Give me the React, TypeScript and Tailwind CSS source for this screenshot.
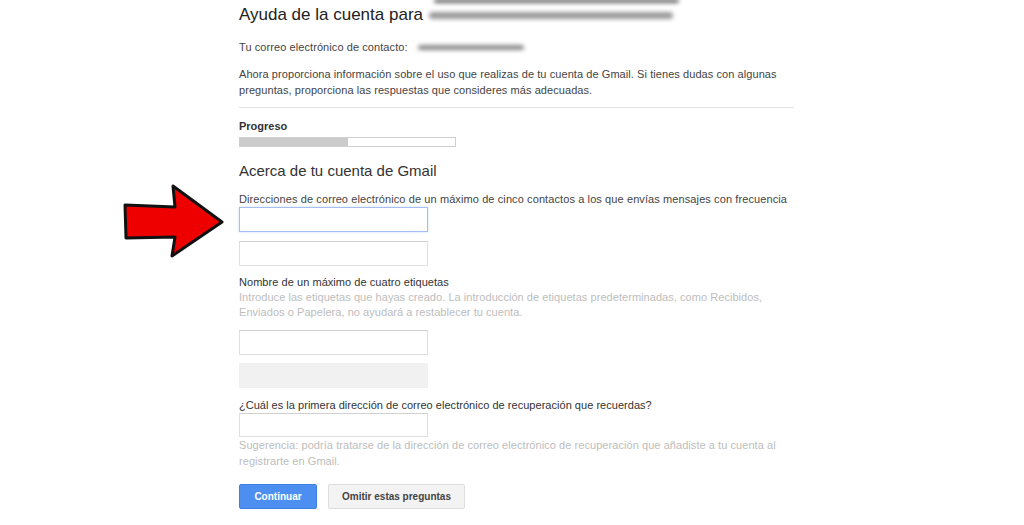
import React from "react";

function Blur({ className }: { className: string }) {
  return <span className={`inline-block rounded-full bg-[#8a8a8a] blur-[2px] ${className}`} />;
}

export default function App() {
  return (
    <div
      className="relative w-[1024px] h-[525px] overflow-hidden bg-white text-[#444]"
      style={{ fontFamily: '"Liberation Sans", Arial, sans-serif' }}
    >
      <div className="ml-[239px] w-[555px] flex flex-col">
        <div className="h-[4px] flex">
          <Blur className="ml-[195px] w-[245px] h-[4px] -mt-[1px] bg-[#666]" />
        </div>
        <div className="mt-[1px] h-[20px] flex items-center text-[17px] leading-[20px] text-[#222]">
          <span>Ayuda de la cuenta para</span>
          <Blur className="ml-[6px] w-[244px] h-[7px] bg-[#9a9a9a]" />
        </div>
        <div className="mt-[14px] h-[16px] flex items-center text-[11px] leading-4 tracking-[0.08px] text-[#444]">
          <span>Tu correo electrónico de contacto:</span>
          <Blur className="ml-[10px] w-[106px] h-[5px] bg-[#8a8a8a]" />
        </div>
        <p className="mt-[11px] text-[11px] leading-4 tracking-[0.07px] text-[#444]">
          Ahora proporciona información sobre el uso que realizas de tu cuenta de Gmail. Si tienes dudas con algunas
          <br />
          preguntas, proporciona las respuestas que consideres más adecuadas.
        </p>
        <div className="mt-[9px] border-t border-[#e3e3e3]" />
        <div className="mt-[10px] text-[11px] leading-4 font-bold text-[#333]">Progreso</div>
        <div className="mt-[3px] w-[217px] h-[10px] border border-[#cfcfcf] bg-white">
          <div className="h-full w-[108px] bg-[#cbcbcb]" />
        </div>
        <h2 className="mt-[14px] text-[15px] leading-[20px] text-[#333]">Acerca de tu cuenta de Gmail</h2>
        <div className="mt-[10px] text-[11px] leading-4 tracking-[0.1px] text-[#444]">
          Direcciones de correo electrónico de un máximo de cinco contactos a los que envías mensajes con frecuencia
        </div>
        <div className="w-[189px] h-[25px] border border-[#a6bff0] shadow-[0_0_2px_rgba(77,144,254,0.35)] bg-white" />
        <div className="mt-[9px] w-[189px] h-[25px] border border-[#e0e0e0] border-t-[#d0d0d0] bg-white" />
        <div className="mt-[8px] text-[11px] leading-4 tracking-[0.05px] text-[#333]">Nombre de un máximo de cuatro etiquetas</div>
        <p className="text-[11px] leading-[15px] tracking-[0.05px] text-[#bdbdbd]">
          Introduce las etiquetas que hayas creado. La introducción de etiquetas predeterminadas, como Recibidos,
          <br />
          Enviados o Papelera, no ayudará a restablecer tu cuenta.
        </p>
        <div className="mt-[10px] w-[189px] h-[25px] border border-[#e0e0e0] border-t-[#d0d0d0] bg-white" />
        <div className="mt-[8px] w-[189px] h-[25px] border border-[#f0f0f0] bg-[#f1f1f1]" />
        <div className="mt-[9px] text-[11px] leading-4 tracking-[0.03px] text-[#333]">
          ¿Cuál es la primera dirección de correo electrónico de recuperación que recuerdas?
        </div>
        <div className="w-[189px] h-[24px] border border-[#e0e0e0] border-t-[#d0d0d0] bg-white" />
        <p className="text-[11px] leading-4 tracking-[0.06px] text-[#bdbdbd]">
          Sugerencia: podría tratarse de la dirección de correo electrónico de recuperación que añadiste a tu cuenta al
          <br />
          registrarte en Gmail.
        </p>
        <div className="mt-[15px] flex gap-[11px]">
          <button className="w-[78px] h-[25px] rounded-[2px] bg-[#4d8ff0] border border-[#3f7fe0] text-white text-[10px] font-bold">
            Continuar
          </button>
          <button className="w-[137px] h-[25px] rounded-[2px] bg-[#f3f3f3] border border-[#dedede] text-[#444] text-[10px] font-bold">
            Omitir estas preguntas
          </button>
        </div>
      </div>
      <svg
        className="absolute left-0 top-0"
        width="1024"
        height="525"
        viewBox="0 0 1024 525"
      >
        <polygon
          points="125,205 175,207 173,186 222,222 172,256 175,237 126,238"
          fill="#ee0000"
          stroke="#111"
          strokeWidth="3"
          strokeLinejoin="round"
        />
      </svg>
    </div>
  );
}
